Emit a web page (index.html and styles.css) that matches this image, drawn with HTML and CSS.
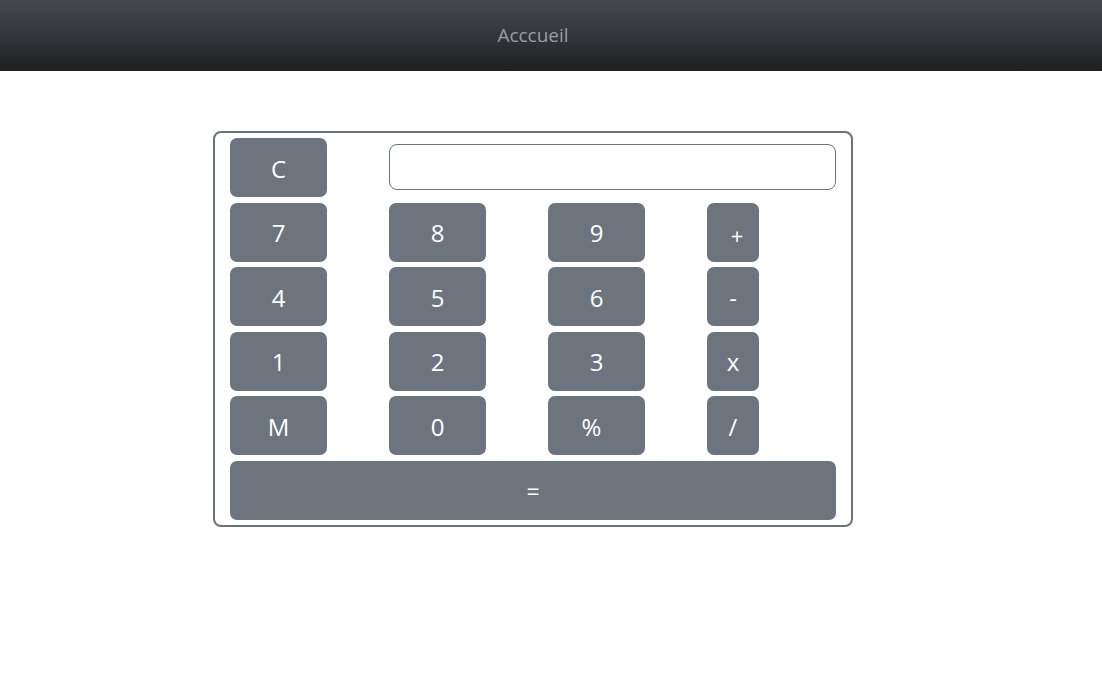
FILE: index.html
```html
<!DOCTYPE html>
<html lang="fr">
<head>
<meta charset="utf-8">
<title>Acccueil</title>
<link rel="stylesheet" href="styles.css">
</head>
<body>
<header class="topbar">
  <span class="topbar-title">Acccueil</span>
</header>
<main class="page">
  <div class="calc">
    <button class="key">C</button>
    <div class="display"></div>
    <button class="key">7</button>
    <button class="key">8</button>
    <button class="key">9</button>
    <button class="key op op-plus">+</button>
    <button class="key">4</button>
    <button class="key">5</button>
    <button class="key">6</button>
    <button class="key op">-</button>
    <button class="key">1</button>
    <button class="key">2</button>
    <button class="key">3</button>
    <button class="key op">x</button>
    <button class="key">M</button>
    <button class="key">0</button>
    <button class="key key-pct">%</button>
    <button class="key op">/</button>
    <button class="key key-eq">=</button>
  </div>
</main>
</body>
</html>
```

FILE: styles.css
```css
* { box-sizing: border-box; }
html, body { margin: 0; padding: 0; background: #fff; }
body { font-family: "Open Sans", "Noto Sans", sans-serif; }

.topbar {
  height: 71px;
  background: linear-gradient(to bottom, #46494d 0%, #303337 55%, #1d1f22 100%);
  display: flex;
  align-items: center;
  justify-content: center;
  padding-right: 36px;
  padding-bottom: 1px;
}
.topbar-title {
  color: #9b9ea2;
  font-size: 19px;
}

.page {
  display: flex;
  justify-content: center;
  padding-top: 60px;
  padding-right: 36px;
}

.calc {
  width: 640px;
  border: 2px solid #6c727a;
  border-radius: 8px;
  padding: 5px 15px 5px 15px;
  display: grid;
  grid-template-columns: 97px 97px 97px 129px;
  grid-auto-rows: 59px;
  column-gap: 62px;
  row-gap: 5.6px;
}

.key {
  font-family: inherit;
  font-size: 24px;
  color: #fff;
  background: #6c757d;
  border: none;
  border-radius: 7px;
  padding: 2px 0 0 0;
  margin: 0;
  line-height: 1;
  display: flex;
  align-items: center;
  justify-content: center;
}
.op { width: 52px; }
.op-plus { padding-left: 8px; padding-top: 5px; font-size: 22px; }
.key-pct { padding-right: 10px; }
.key-eq { grid-column: 1 / -1; font-size: 23px; }

.display {
  grid-column: 2 / -1;
  align-self: center;
  height: 46px;
  margin-top: -1px;
  border: 1px solid #6c727a;
  border-radius: 8px;
  background: #fff;
}
```
